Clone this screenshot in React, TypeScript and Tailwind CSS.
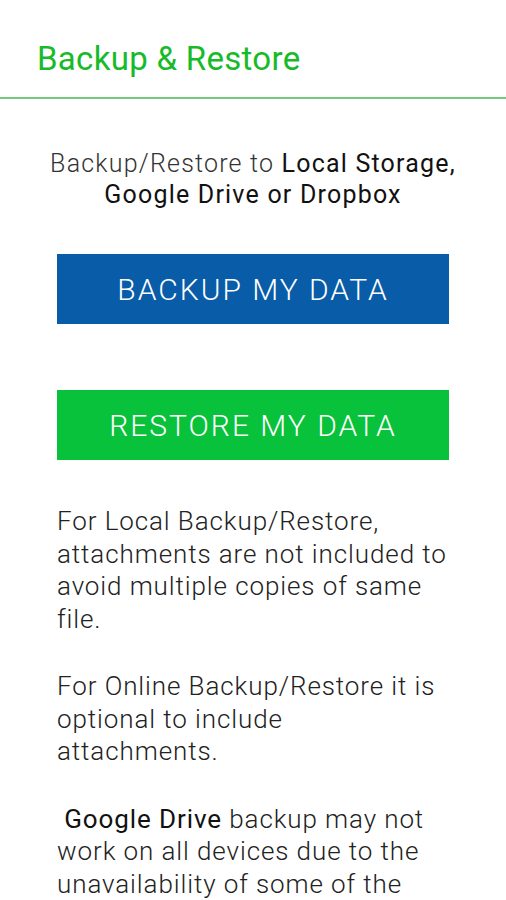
export default function App() {
  return (
    <div className="min-h-[900px] bg-white font-['Roboto',sans-serif]">
      <header className="h-[99px] flex items-end pb-[22px] pl-[37px] border-b-2 border-[#72cc7c]">
        <h1 className="text-[33px] leading-none tracking-[0.3px] text-[#17bb2a]">Backup &amp; Restore</h1>
      </header>

      <div className="px-[57px]">
        <p className="mt-[49px] -mx-[20px] text-center text-[25px] leading-[31px] tracking-[1.2px] font-light text-[#333]">
          Backup/Restore to <span className="font-normal text-[#111]">Local Storage,</span>
          <br />
          <span className="font-normal text-[#111]">Google Drive or Dropbox</span>
        </p>

        <button className="mt-[44px] w-full h-[70px] bg-[#085ca8] text-white text-[30px] tracking-[2px] font-light">
          BACKUP MY DATA
        </button>
        <button className="mt-[66px] w-full h-[70px] bg-[#08c23b] text-white text-[30px] tracking-[2px] font-light">
          RESTORE MY DATA
        </button>

        <div className="mt-[45px] text-[26px] leading-[32.5px] tracking-[0.9px] font-light text-[#222] space-y-[35px]">
          <p>For Local Backup/Restore, attachments are not included to avoid multiple copies of same file.</p>
          <p>
            For Online Backup/Restore it is optional to include
            <br />
            attachments.
          </p>
          <p>
            &nbsp;<span className="font-normal text-[#111]">Google Drive</span> backup may not work on all devices due
            to the unavailability of some of the required services.
          </p>
        </div>
      </div>
    </div>
  );
}
